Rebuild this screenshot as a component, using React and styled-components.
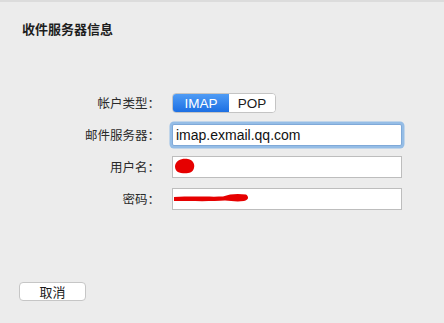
import React from "react";
import styled, { createGlobalStyle } from "styled-components";

const Global = createGlobalStyle`
  html, body { margin: 0; padding: 0; background: #ececec; }
`;

const Window = styled.div`
  width: 444px;
  height: 323px;
  box-sizing: border-box;
  background: #ececec;
  border-top: 2px solid #dcdcdc;
  padding: 18px 19px 22px 19px;
  display: flex;
  flex-direction: column;
  font-family: "Liberation Sans", "Noto Sans CJK SC", sans-serif;
  color: #1e1e1e;
`;

const Title = styled.div`
  font-size: 13px;
  font-weight: bold;
  line-height: 17px;
  margin-left: 3px;
  font-family: "Noto Sans CJK SC", sans-serif;
`;

const Form = styled.div`
  margin-top: 55px;
  display: grid;
  grid-template-columns: 141px 230px;
  grid-auto-rows: 22px;
  column-gap: 12px;
  row-gap: 10px;
`;

const Label = styled.div`
  text-align: right;
  font-size: 12.5px;
  line-height: 22px;
  color: #2a2a2a;
  font-family: "Noto Sans CJK SC", sans-serif;
`;

const Segmented = styled.div`
  display: flex;
  align-self: center;
  width: 104px;
  height: 20px;
  border: 1px solid #c4c4c4;
  border-radius: 4px;
  overflow: hidden;
  background: #fff;
  box-sizing: border-box;
`;

const Segment = styled.div`
  flex: ${(p) => (p.active ? "0 0 56px" : "1")};
  display: flex;
  align-items: center;
  justify-content: center;
  font-size: 13.5px;
  color: ${(p) => (p.active ? "#fff" : "#1a1a1a")};
  background: ${(p) => (p.active ? "linear-gradient(#4f9cf5, #1c6fe3)" : "#fff")};
`;

const Field = styled.div`
  position: relative;
  box-sizing: border-box;
  height: 22px;
  background: #fff;
  border: 1px solid ${(p) => (p.focused ? "#7fa9d8" : "#bdbdbd")};
  box-shadow: ${(p) => (p.focused ? "0 0 0 2.5px #95bde6" : "none")};
  border-radius: ${(p) => (p.focused ? "2px" : "0")};
  font-size: 14px;
  line-height: 20px;
  padding-left: 3px;
  color: #111;
`;

const Redact = styled.svg`
  position: absolute;
  left: 0;
  top: 0;
`;

const Footer = styled.div`
  margin-top: auto;
`;

const Button = styled.button`
  width: 67px;
  height: 19px;
  margin-left: 0;
  padding: 0;
  border: 1px solid #c6c6c6;
  border-radius: 4px;
  background: #fff;
  font-size: 13px;
  color: #1a1a1a;
  font-family: "Noto Sans CJK SC", sans-serif;
  line-height: 17px;
`;

export default function App() {
  return (
    <>
      <Global />
      <Window>
        <Title>收件服务器信息</Title>
        <Form>
          <Label>帐户类型：</Label>
          <Segmented>
            <Segment active>IMAP</Segment>
            <Segment>POP</Segment>
          </Segmented>

          <Label>邮件服务器：</Label>
          <Field focused>imap.exmail.qq.com</Field>

          <Label>用户名：</Label>
          <Field>
            <Redact width="40" height="20" viewBox="0 0 40 20">
              <path d="M2 9 C3 3 9 1 15 2 C20 3 22 7 21 11 C20 16 14 17 8 16 C3 15 2 12 2 9 Z" fill="#e60000" />
            </Redact>
          </Field>

          <Label>密码：</Label>
          <Field>
            <Redact width="90" height="20" viewBox="0 0 90 20">
              <path d="M1 8 C20 7 38 8 50 7.5 C57 4.5 66 4.5 73 5.5 C76 7.5 76 11 71 12 C64 13 58 12 52 11.5 C40 12.5 20 12 1 12 Z" fill="#e60000" />
            </Redact>
          </Field>
        </Form>
        <Footer>
          <Button>取消</Button>
        </Footer>
      </Window>
    </>
  );
}
